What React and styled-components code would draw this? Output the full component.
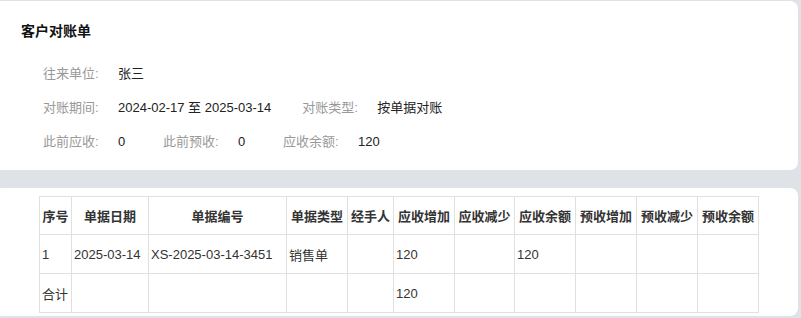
import styled, { createGlobalStyle } from "styled-components";

const GlobalStyle = createGlobalStyle`
  html, body {
    margin: 0;
    padding: 0;
    background: #dfe3e8;
    font-family: "Liberation Sans", "Noto Sans CJK SC", sans-serif;
    font-size: 13px;
    color: #333;
  }
`;

const Page = styled.div`
  display: flex;
  flex-direction: column;
  gap: 18px;
  padding: 1px 3px 0 0;
  margin-left: -6px;
`;

const Card = styled.section`
  background: #fff;
  border-radius: 8px;
  padding: ${(p) => p.$pad};
`;

const Title = styled.h2`
  margin: 0 0 23px;
  font-size: 14px;
  font-weight: bold;
  line-height: 20px;
  color: #111;
`;

const Info = styled.div`
  display: flex;
  flex-direction: column;
  gap: 14px;
  padding-left: 22px;
`;

const InfoRow = styled.div`
  display: flex;
  align-items: center;
  line-height: 20px;
`;

const Label = styled.span`
  width: 75px;
  color: #999;
`;

const Value = styled.span`
  min-width: 20px;
  padding-right: ${(p) => p.$gap || 25}px;
  color: #222;
`;

const Table = styled.table`
  border-collapse: collapse;
  table-layout: fixed;
  width: 719px;
`;

const Th = styled.th`
  border: 1px solid #e0e0e0;
  height: 37px;
  padding: 0;
  font-weight: bold;
  font-size: 13px;
  text-align: center;
  color: #333;
  white-space: nowrap;
`;

const Td = styled.td`
  border: 1px solid #e0e0e0;
  height: 38px;
  padding: 0 2px;
  color: #333;
  white-space: nowrap;
`;

const columns = [
  ["序号", 32],
  ["单据日期", 77],
  ["单据编号", 138],
  ["单据类型", 61],
  ["经手人", 46],
  ["应收增加", 61],
  ["应收减少", 60],
  ["应收余额", 61],
  ["预收增加", 61],
  ["预收减少", 61],
  ["预收余额", 61],
];

const rows = [
  ["1", "2025-03-14", "XS-2025-03-14-3451", "销售单", "", "120", "", "120", "", "", ""],
  ["合计", "", "", "", "", "120", "", "", "", "", ""],
];

export default function App() {
  return (
    <>
      <GlobalStyle />
      <Page>
        <Card $pad="20px 20px 18px 27px">
          <Title>客户对账单</Title>
          <Info>
            <InfoRow>
              <Label>往来单位:</Label>
              <Value>张三</Value>
            </InfoRow>
            <InfoRow>
              <Label>对账期间:</Label>
              <Value $gap={31}>2024-02-17 至 2025-03-14</Value>
              <Label>对账类型:</Label>
              <Value>按单据对账</Value>
            </InfoRow>
            <InfoRow>
              <Label>此前应收:</Label>
              <Value>0</Value>
              <Label>此前预收:</Label>
              <Value>0</Value>
              <Label>应收余额:</Label>
              <Value>120</Value>
            </InfoRow>
          </Info>
        </Card>
        <Card $pad="8px 20px 3px 45px">
          <Table>
            <colgroup>
              {columns.map(([name, w]) => (
                <col key={name} style={{ width: w }} />
              ))}
            </colgroup>
            <thead>
              <tr>
                {columns.map(([name]) => (
                  <Th key={name}>{name}</Th>
                ))}
              </tr>
            </thead>
            <tbody>
              {rows.map((r, i) => (
                <tr key={i}>
                  {r.map((c, j) => (
                    <Td key={j}>{c}</Td>
                  ))}
                </tr>
              ))}
            </tbody>
          </Table>
        </Card>
      </Page>
    </>
  );
}
